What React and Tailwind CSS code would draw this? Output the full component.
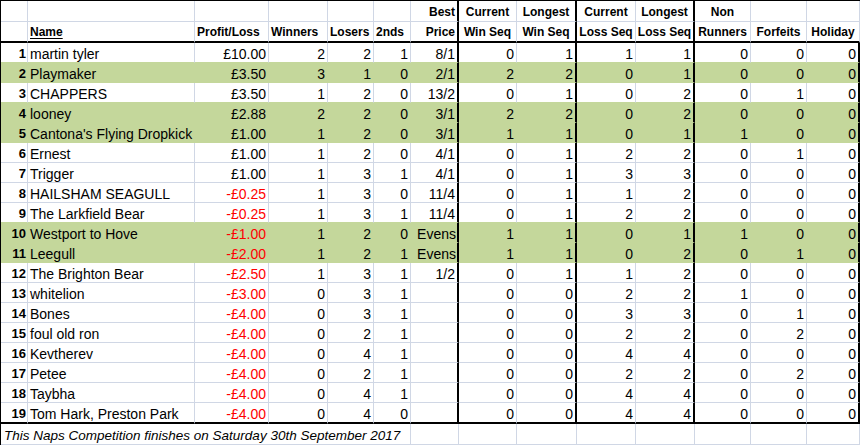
import React from 'react';

const COLS = 'grid grid-cols-[27px_167px_74px_59px_46px_37px_48px_58px_60px_59px_59px_56px_56px_53px]';
const GREEN = 'bg-[#C4D79B]';

// [name, profit/loss, winners, losers, 2nds, best, curWin, longWin, curLoss, longLoss, nonRunners, forfeits, holiday, highlighted]
const rows = [
  ['martin tyler', '£10.00', 2, 2, 1, '8/1', 0, 1, 1, 1, 0, 0, 0, false],
  ['Playmaker', '£3.50', 3, 1, 0, '2/1', 2, 2, 0, 1, 0, 0, 0, true],
  ['CHAPPERS', '£3.50', 1, 2, 0, '13/2', 0, 1, 0, 2, 0, 1, 0, false],
  ['looney', '£2.88', 2, 2, 0, '3/1', 2, 2, 0, 2, 0, 0, 0, true],
  ["Cantona's Flying Dropkick", '£1.00', 1, 2, 0, '3/1', 1, 1, 0, 1, 1, 0, 0, true],
  ['Ernest', '£1.00', 1, 2, 0, '4/1', 0, 1, 2, 2, 0, 1, 0, false],
  ['Trigger', '£1.00', 1, 3, 1, '4/1', 0, 1, 3, 3, 0, 0, 0, false],
  ['HAILSHAM SEAGULL', '-£0.25', 1, 3, 0, '11/4', 0, 1, 1, 2, 0, 0, 0, false],
  ['The Larkfield Bear', '-£0.25', 1, 3, 1, '11/4', 0, 1, 2, 2, 0, 0, 0, false],
  ['Westport to Hove', '-£1.00', 1, 2, 0, 'Evens', 1, 1, 0, 1, 1, 0, 0, true],
  ['Leegull', '-£2.00', 1, 2, 1, 'Evens', 1, 1, 0, 2, 0, 1, 0, true],
  ['The Brighton Bear', '-£2.50', 1, 3, 1, '1/2', 0, 1, 1, 2, 0, 0, 0, false],
  ['whitelion', '-£3.00', 0, 3, 1, '', 0, 0, 2, 2, 1, 0, 0, false],
  ['Bones', '-£4.00', 0, 3, 1, '', 0, 0, 3, 3, 0, 1, 0, false],
  ['foul old ron', '-£4.00', 0, 2, 1, '', 0, 0, 2, 2, 0, 2, 0, false],
  ['Kevtherev', '-£4.00', 0, 4, 1, '', 0, 0, 4, 4, 0, 0, 0, false],
  ['Petee', '-£4.00', 0, 2, 1, '', 0, 0, 2, 2, 0, 2, 0, false],
  ['Taybha', '-£4.00', 0, 4, 1, '', 0, 0, 4, 4, 0, 0, 0, false],
  ['Tom Hark, Preston Park', '-£4.00', 0, 4, 0, '', 0, 0, 4, 4, 0, 0, 0, false],
];

const head1 = ['', '', '', '', '', '', 'Best', 'Current', 'Longest', 'Current', 'Longest', 'Non', '', ''];
const head2 = ['', 'Name', 'Profit/Loss', 'Winners', 'Losers', '2nds', 'Price', 'Win Seq', 'Win Seq', 'Loss Seq', 'Loss Seq', 'Runners', 'Forfeits', 'Holiday'];

function rightBorder(i, green, dataRow) {
  if (i === 6 || i === 8 || i === 10) return 'border-r-2 border-r-black';
  if (i === 13 && dataRow) return 'border-r-2 border-r-black';
  return green ? 'border-r border-r-[#C4D79B]' : 'border-r border-r-[#D0D7E5]';
}

function headAlign(i) {
  if (i === 6) return 'justify-end pr-[2px]';
  if (i >= 7) return 'justify-center';
  return 'justify-start pl-[2px]';
}

function HeaderRow({ cells, last }) {
  return (
    <div className={`${COLS} h-[21px]`}>
      {cells.map((c, i) => (
        <div
          key={i}
          className={`flex items-end pb-[1px] whitespace-nowrap text-[12px] leading-[15px] font-bold ${headAlign(i)} ${rightBorder(i, false, false)} ${last ? 'border-b-2 border-b-black' : 'border-b border-b-[#D0D7E5]'}`}
        >
          {i === 1 && c ? <span className="underline underline-offset-[2px]">{c}</span> : c}
        </div>
      ))}
    </div>
  );
}

function DataRow({ idx, row, nextGreen, last }) {
  const green = row[13];
  const cells = [idx + 1, ...row.slice(0, 13)];
  const bottom = last
    ? 'border-b-2 border-b-black'
    : green || nextGreen
      ? 'border-b border-b-[#C4D79B]'
      : 'border-b border-b-[#D0D7E5]';
  return (
    <div className={`${COLS} ${last ? 'h-[21px]' : 'h-[20px]'} ${green ? GREEN : 'bg-white'}`}>
      {cells.map((c, i) => {
        let cls = 'justify-end pr-[2px] text-[14px] leading-[16px]';
        if (i === 0) cls = 'justify-end pr-[1px] text-[13px] leading-[16px] font-bold';
        if (i === 1) cls = 'justify-start pl-[2px] text-[14px] leading-[16px]';
        if (i === 2 && String(c).startsWith('-')) cls += ' text-[#FF0000]';
        if (i === 6 && c === 'Evens') cls = 'justify-end pr-[1px] text-[14px] leading-[16px]';
        return (
          <div key={i} className={`flex items-end whitespace-nowrap ${cls} ${rightBorder(i, green, true)} ${bottom}`}>
            {c}
          </div>
        );
      })}
    </div>
  );
}

export default function App() {
  return (
    <div className="min-h-screen bg-white font-['Liberation_Sans',Arial,sans-serif] text-black">
      <div className="w-[860px] border-l border-l-black border-t border-t-black">
        <HeaderRow cells={head1} />
        <HeaderRow cells={head2} last />
        {rows.map((r, i) => (
          <DataRow key={i} idx={i} row={r} nextGreen={rows[i + 1] ? rows[i + 1][13] : false} last={i === rows.length - 1} />
        ))}

        {/* Footer note */}
        <div className="grid grid-cols-[410px_48px_58px_60px_59px_59px_56px_56px_53px] h-[21px]">
          <div className="flex items-end pl-[3px] whitespace-nowrap text-[13.5px] leading-[16px] italic border-r border-r-[#D0D7E5] border-b border-b-[#D0D7E5]">
            This Naps Competition finishes on Saturday 30th September 2017
          </div>
          {Array.from({ length: 8 }, (_, i) => (
            <div key={i} className="border-r border-r-[#D0D7E5] border-b border-b-[#D0D7E5]" />
          ))}
        </div>
      </div>
    </div>
  );
}
